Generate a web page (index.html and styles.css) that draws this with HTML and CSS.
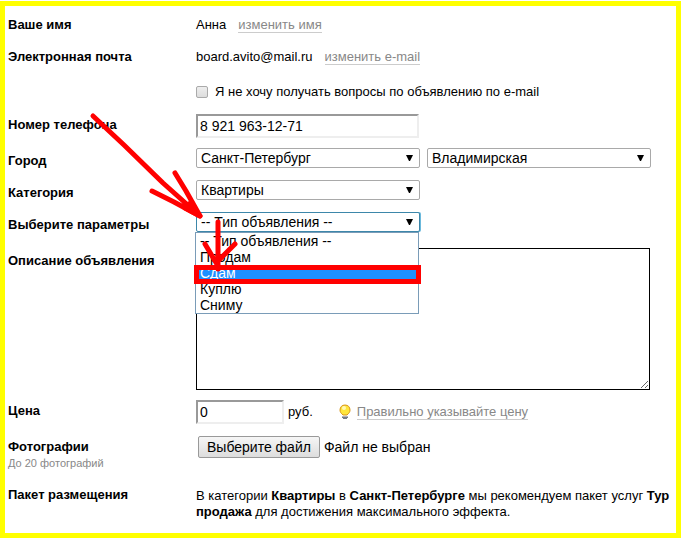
FILE: index.html
```html
<!DOCTYPE html>
<html lang="ru">
<head>
<meta charset="utf-8">
<title>Подача объявления</title>
<link rel="stylesheet" href="styles.css">
</head>
<body>
<form class="form">
  <div class="row">
    <div class="label">Ваше имя</div>
    <div class="field">Анна <a class="hint" href="#name">изменить имя</a></div>
  </div>
  <div class="row row-after-text">
    <div class="label">Электронная почта</div>
    <div class="field">board.avito@mail.ru <a class="hint" href="#email">изменить e-mail</a></div>
  </div>
  <div class="row row-check">
    <div class="label"></div>
    <div class="field">
      <input class="check" type="checkbox" id="no-mail">
      <label for="no-mail">Я не хочу получать вопросы по объявлению по e-mail</label>
    </div>
  </div>
  <div class="row row-phone">
    <label class="label label-input" for="phone">Номер телефона</label>
    <div class="field"><input class="input input-phone" id="phone" type="text" value="8 921 963-12-71"></div>
  </div>
  <div class="row row-tight">
    <label class="label label-select" for="city">Город</label>
    <div class="field field-selects">
      <select class="select" id="city"><option>Санкт-Петербург</option></select>
      <select class="select" aria-label="Метро"><option>Владимирская</option></select>
    </div>
  </div>
  <div class="row row-select">
    <label class="label label-select" for="category">Категория</label>
    <div class="field field-selects"><select class="select" id="category"><option>Квартиры</option></select></div>
  </div>
  <div class="row row-select">
    <label class="label label-select" for="kind">Выберите параметры</label>
    <div class="field field-selects">
      <div class="dropdown">
        <select class="select select-open" id="kind"><option>-- Тип объявления --</option></select>
        <ul class="menu" role="listbox" aria-label="Тип объявления">
          <li role="option">-- Тип объявления --</li>
          <li role="option">Продам</li>
          <li role="option" aria-selected="true" class="active">Сдам</li>
          <li role="option">Куплю</li>
          <li role="option">Сниму</li>
        </ul>
      </div>
    </div>
  </div>
  <div class="row row-text">
    <label class="label label-select" for="text">Описание объявления</label>
    <div class="field"><textarea class="textarea" id="text"></textarea></div>
  </div>
  <div class="row row-tight">
    <label class="label label-input" for="price">Цена</label>
    <div class="field">
      <input class="input input-price" id="price" type="text" value="0">
      <span class="unit">руб.</span>
      <svg class="bulb" viewBox="0 0 12 16" aria-hidden="true">
        <path d="M6 1C3 1 1 3 1 6c0 2 1 3 2 4l1 1h4l1-1c1-1 2-2 2-4 0-3-2-5-5-5z" fill="#ffe63c" stroke="#d9951c"/>
        <circle cx="5" cy="4" r="2" fill="#fff9b8"/>
        <path d="M3 12h6v2H8v1H4v-1H3z" fill="#777b88"/>
        <path d="M3 12h6v1H3z" fill="#b4b7c0"/>
      </svg>
      <a class="hint hint-price" href="#price-help">Правильно указывайте цену</a>
    </div>
  </div>
  <div class="row row-photos">
    <div class="label label-input">Фотографии<small class="note">До 20 фотографий</small></div>
    <div class="field field-file"><button class="file" type="button">Выберите файл</button><span>Файл не выбран</span></div>
  </div>
  <div class="row row-package">
    <div class="label">Пакет размещения</div>
    <div class="field field-package"><p class="package">В категории <b>Квартиры</b> в <b>Санкт-Петербурге</b> мы рекомендуем пакет услуг <b>Тур<br>продажа</b> для достижения максимального эффекта.</p></div>
  </div>
  <svg class="marks" width="430" height="300" viewBox="0 0 430 300" aria-hidden="true">
    <g fill="none" stroke="#f00" stroke-width="5" stroke-linecap="round" stroke-linejoin="round">
      <path d="M93 116L124 145L163 183L200 216M175 173L186 191L200 216M152 191L174 202L200 216"/>
      <path fill="#f00" d="M189 204L200 216L185 208Z"/>
      <path d="M218 222V269M205 244L218 266M235 244L218 261"/>
    </g>
    <path fill="#f00" fill-rule="evenodd" d="M194 265H421V284H194ZM199 270V279H416V270Z"/>
  </svg>
</form>
</body>
</html>
```

FILE: styles.css
```css
* {
  box-sizing: border-box;
}

body {
  margin: 0;
  padding-top: 1px;
  background: #fff;
  color: #000;
  font: 13px/16px "Liberation Sans", Arial, sans-serif;
}

.form {
  min-height: calc(100vh - 1px);
  padding: 10px 0 12px 3px;
  border: 5px solid #ff0;
}

.row {
  display: flex;
}

.row-after-text,
.row-text,
.row-phone {
  margin-top: 14px;
}

.row-check {
  margin-top: 18px;
}

.row-tight,
.row-select {
  margin-top: 10px;
}

.row-photos {
  margin-top: 12px;
}

.row-package {
  margin-top: 16px;
}

.label {
  flex: 0 0 188px;
  font-weight: bold;
  line-height: 18px;
}

.label-input {
  padding-top: 2px;
}

.label-select {
  padding-top: 4px;
}

.note {
  display: block;
  color: #888;
  font-size: 11px;
  font-weight: normal;
  line-height: 14px;
}

.field {
  display: flex;
  flex: 1;
  align-items: center;
  min-width: 0;
}

.field-selects {
  gap: 7px;
  align-items: flex-start;
}

.hint {
  margin-left: 12px;
  border-bottom: 1px solid #ccc;
  color: #888;
  line-height: 15px;
  text-decoration: none;
}

.hint-price {
  margin-left: 6px;
}

.check {
  appearance: none;
  width: 12px;
  height: 12px;
  margin: 0 7px 0 0;
  border: 1px solid #aaa;
  border-radius: 2px;
  background: linear-gradient(#eee, #ddd);
}

.input {
  height: 24px;
  padding: 1px 2px;
  border: 2px solid;
  border-color: #999 #eee #eee #999;
  background: #fff;
  font: 14px "Liberation Sans", Arial, sans-serif;
}

.input-phone {
  width: 223px;
}

.input-price {
  width: 88px;
}

.unit {
  margin-left: 4px;
}

.bulb {
  width: 12px;
  height: 16px;
  margin-left: 26px;
}

.select {
  width: 224px;
  height: 20px;
  padding: 0 4px;
  appearance: none;
  border: 1px solid #a9a9a9;
  border-radius: 2px;
  color: #000;
  font: 14px "Liberation Sans", Arial, sans-serif;
  background: #fff url("data:image/svg+xml,%3Csvg xmlns='http://www.w3.org/2000/svg' width='7' height='7'%3E%3Cpath d='M0 0h7L4 6H3z'/%3E%3C/svg%3E") no-repeat right 6px center;
}

.dropdown {
  position: relative;
}

.dropdown .select {
  display: block;
}

.select-open {
  border-color: #3d87aa;
  box-shadow: 1px 0 #6bb9dc;
}

.menu {
  position: absolute;
  top: 20px;
  left: -1px;
  z-index: 1;
  width: 224px;
  margin: 0;
  padding: 0;
  border: 1px solid #7a9cb8;
  background: #fff;
  font-size: 14px;
  list-style: none;
}

.menu li {
  padding-left: 4px;
}

.menu .active {
  background: #1e90ff;
  color: #fff;
}

.textarea {
  display: block;
  width: 454px;
  height: 142px;
  border: 1px solid #000;
  background: #fff;
}

.field-file {
  gap: 4px;
  align-items: flex-start;
  padding-left: 2px;
  font-size: 14px;
  line-height: 22px;
}

.file {
  height: 22px;
  padding: 0 8px;
  border: 1px solid #999;
  border-radius: 2px;
  background: linear-gradient(#f6f6f6, #ddd);
  color: #000;
  font: 14px "Liberation Sans", Arial, sans-serif;
}

.field-package {
  padding-top: 2px;
}

.package {
  margin: 0;
  white-space: nowrap;
}

.marks {
  position: absolute;
  top: 0;
  left: 0;
  z-index: 2;
  pointer-events: none;
}
```
